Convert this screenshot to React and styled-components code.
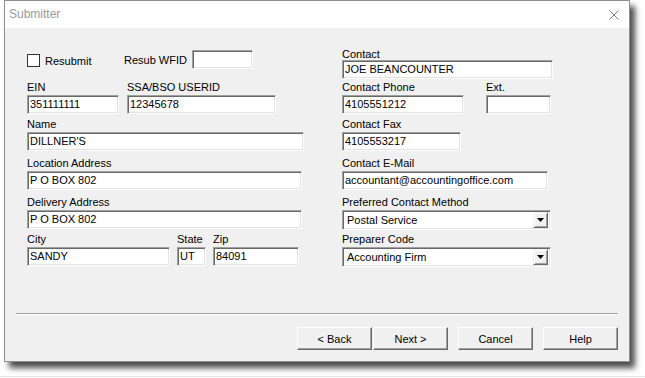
import React from "react";
import styled, { createGlobalStyle } from "styled-components";

const GlobalStyle = createGlobalStyle`
  html, body { margin: 0; padding: 0; background: #ffffff; }
  body { font-family: "Liberation Sans", Arial, sans-serif; font-size: 11px; color: #000; }
  * { box-sizing: border-box; }
`;

const Page = styled.div`
  width: 645px;
  height: 378px;
  padding-left: 4px;
  overflow: hidden;
  display: flex;
  flex-direction: column;
`;

const Window = styled.div`
  width: 626px;
  height: 362px;
  border: 1px solid #8f8f8f;
  display: flex;
  flex-direction: column;
  box-shadow: 5px 6px 6px rgba(0, 0, 0, 0.7);
  background: #f0f0f0;
`;

const TitleBar = styled.div`
  height: 27px;
  background: #ffffff;
  display: flex;
  align-items: center;
  justify-content: space-between;
  padding: 0 10px 1px 4px;
  font-size: 12px;
  color: #999999;
`;

const CloseIcon = styled.svg`
  width: 10px;
  height: 10px;
  margin-top: 2px;
`;

const Client = styled.div`
  flex: 1;
  display: flex;
  flex-direction: column;
  background: #f0f0f0;
`;

const Form = styled.div`
  height: 285px;
  display: flex;
`;

const Column = styled.div`
  display: flex;
  flex-direction: column;
  margin-left: ${(p) => p.$left}px;
  padding-top: ${(p) => p.$top}px;
  width: ${(p) => p.$width}px;
`;

const Row = styled.div`
  display: flex;
  align-items: flex-start;
  margin-top: ${(p) => p.$mt || 0}px;
  gap: ${(p) => p.$gap || 0}px;
`;

const CheckRow = styled.div`
  display: flex;
  align-items: center;
  height: 19px;
`;

const CheckGroup = styled.label`
  display: flex;
  align-items: center;
  width: 97px;
  padding-top: 2px;
`;

const CheckBox = styled.span`
  width: 13px;
  height: 13px;
  border: 1px solid #333333;
  background: #ffffff;
  margin-right: 5px;
`;

const InlineLabel = styled.span`
  line-height: 12px;
  margin-right: ${(p) => p.$mr || 0}px;
  margin-top: ${(p) => p.$mt || 0}px;
`;

const Field = styled.div`
  display: flex;
  flex-direction: column;
  width: ${(p) => p.$width}px;
  margin-top: ${(p) => p.$mt || 0}px;
`;

const Label = styled.div`
  line-height: 12px;
  height: 12px;
  margin-bottom: ${(p) => (p.$tight ? 0 : 2)}px;
  white-space: nowrap;
`;

const TextBox = styled.div`
  width: ${(p) => (p.$width ? `${p.$width}px` : "100%")};
  height: 19px;
  background: #ffffff;
  border-style: solid;
  border-width: 1px;
  border-color: #a0a0a0 #ffffff #ffffff #a0a0a0;
  box-shadow: inset 1px 1px 0 #696969, inset -1px -1px 0 #e3e3e3;
  padding: 0 2px 0 2px;
  line-height: 17px;
  white-space: nowrap;
  overflow: hidden;
`;

const Select = styled.div`
  width: 100%;
  height: 20px;
  background: #ffffff;
  border-style: solid;
  border-width: 1px;
  border-color: #a0a0a0 #ffffff #ffffff #a0a0a0;
  box-shadow: inset 1px 1px 0 #696969, inset -1px -1px 0 #e3e3e3;
  padding: 1px 2px 1px 4px;
  display: flex;
  align-items: center;
  justify-content: space-between;
`;

const SelectText = styled.span`
  line-height: 16px;
`;

const DropButton = styled.span`
  width: 15px;
  height: 16px;
  background: #f0f0f0;
  border-style: solid;
  border-width: 1px;
  border-color: #f0f0f0 #696969 #696969 #f0f0f0;
  box-shadow: inset 1px 1px 0 #ffffff, inset -1px -1px 0 #a0a0a0;
  display: flex;
  align-items: center;
  justify-content: center;
`;

const Separator = styled.div`
  margin: 0 11px;
  height: 2px;
  border-top: 1px solid #a0a0a0;
  border-bottom: 1px solid #ffffff;
`;

const ButtonRow = styled.div`
  display: flex;
  justify-content: flex-end;
  padding: 12px 11px 0 11px;
`;

const Button = styled.button`
  width: 75px;
  height: 23px;
  margin-left: ${(p) => p.$ml || 0}px;
  background: #f0f0f0;
  border-style: solid;
  border-width: 1px;
  border-color: #ffffff #696969 #696969 #ffffff;
  box-shadow: inset -1px -1px 0 #a0a0a0, inset 1px 1px 0 #f0f0f0;
  font-family: "Liberation Sans", Arial, sans-serif;
  font-size: 11px;
  color: #000;
  padding: 0;
`;

const Backdrop = styled.div`
  margin-top: 14px;
  margin-left: -4px;
  height: 1px;
  background: #e4e4e4;
`;

function Triangle() {
  return (
    <svg width="7" height="4" viewBox="0 0 7 4">
      <path d="M0 0 H7 L3.5 4 Z" fill="#000" />
    </svg>
  );
}

function TextField({ label, value, width, mt, tight }) {
  return (
    <Field $width={width} $mt={mt}>
      <Label $tight={tight}>{label}</Label>
      <TextBox>{value}</TextBox>
    </Field>
  );
}

function SelectField({ label, value, width, mt }) {
  return (
    <Field $width={width} $mt={mt}>
      <Label>{label}</Label>
      <Select>
        <SelectText>{value}</SelectText>
        <DropButton>
          <Triangle />
        </DropButton>
      </Select>
    </Field>
  );
}

export default function App() {
  return (
    <Page>
      <GlobalStyle />
      <Window>
        <TitleBar>
          <span>Submitter</span>
          <CloseIcon viewBox="0 0 10 10">
            <path d="M0.5 0.5 L9.5 9.5 M9.5 0.5 L0.5 9.5" stroke="#7a7a7a" strokeWidth="1" fill="none" />
          </CloseIcon>
        </TitleBar>
        <Client>
          <Form>
            <Column $left={22} $top={22} $width={290}>
              <CheckRow>
                <CheckGroup>
                  <CheckBox />
                  <InlineLabel>Resubmit</InlineLabel>
                </CheckGroup>
                <InlineLabel $mr={5}>Resub WFID</InlineLabel>
                <TextBox $width={61} />
              </CheckRow>
              <Row $mt={12} $gap={8}>
                <TextField label="EIN" value="351111111" width={92} />
                <TextField label="SSA/BSO USERID" value="12345678" width={149} />
              </Row>
              <TextField label="Name" value="DILLNER'S" width={277} mt={4} />
              <TextField label="Location Address" value="P O BOX 802" width={275} mt={6} />
              <TextField label="Delivery Address" value="P O BOX 802" width={275} mt={6} />
              <Row $mt={4} $gap={7}>
                <TextField label="City" value="SANDY" width={143} />
                <TextField label="State" value="UT" width={29} />
                <TextField label="Zip" value="84091" width={86} />
              </Row>
            </Column>
            <Column $left={25} $top={20} $width={215}>
              <TextField label="Contact" value="JOE BEANCOUNTER" width={211} tight />
              <Row $mt={2} $gap={22}>
                <TextField label="Contact Phone" value="4105551212" width={122} />
                <TextField label="Ext." value="" width={65} />
              </Row>
              <TextField label="Contact Fax" value="4105553217" width={119} mt={4} />
              <TextField label="Contact E-Mail" value="accountant@accountingoffice.com" width={206} mt={6} />
              <SelectField label="Preferred Contact Method" value="Postal Service" width={209} mt={6} />
              <SelectField label="Preparer Code" value="Accounting Firm" width={209} mt={3} />
            </Column>
          </Form>
          <Separator />
          <ButtonRow>
            <Button>&lt; Back</Button>
            <Button $ml={1}>Next &gt;</Button>
            <Button $ml={10}>Cancel</Button>
            <Button $ml={10}>Help</Button>
          </ButtonRow>
        </Client>
      </Window>
      <Backdrop />
    </Page>
  );
}
